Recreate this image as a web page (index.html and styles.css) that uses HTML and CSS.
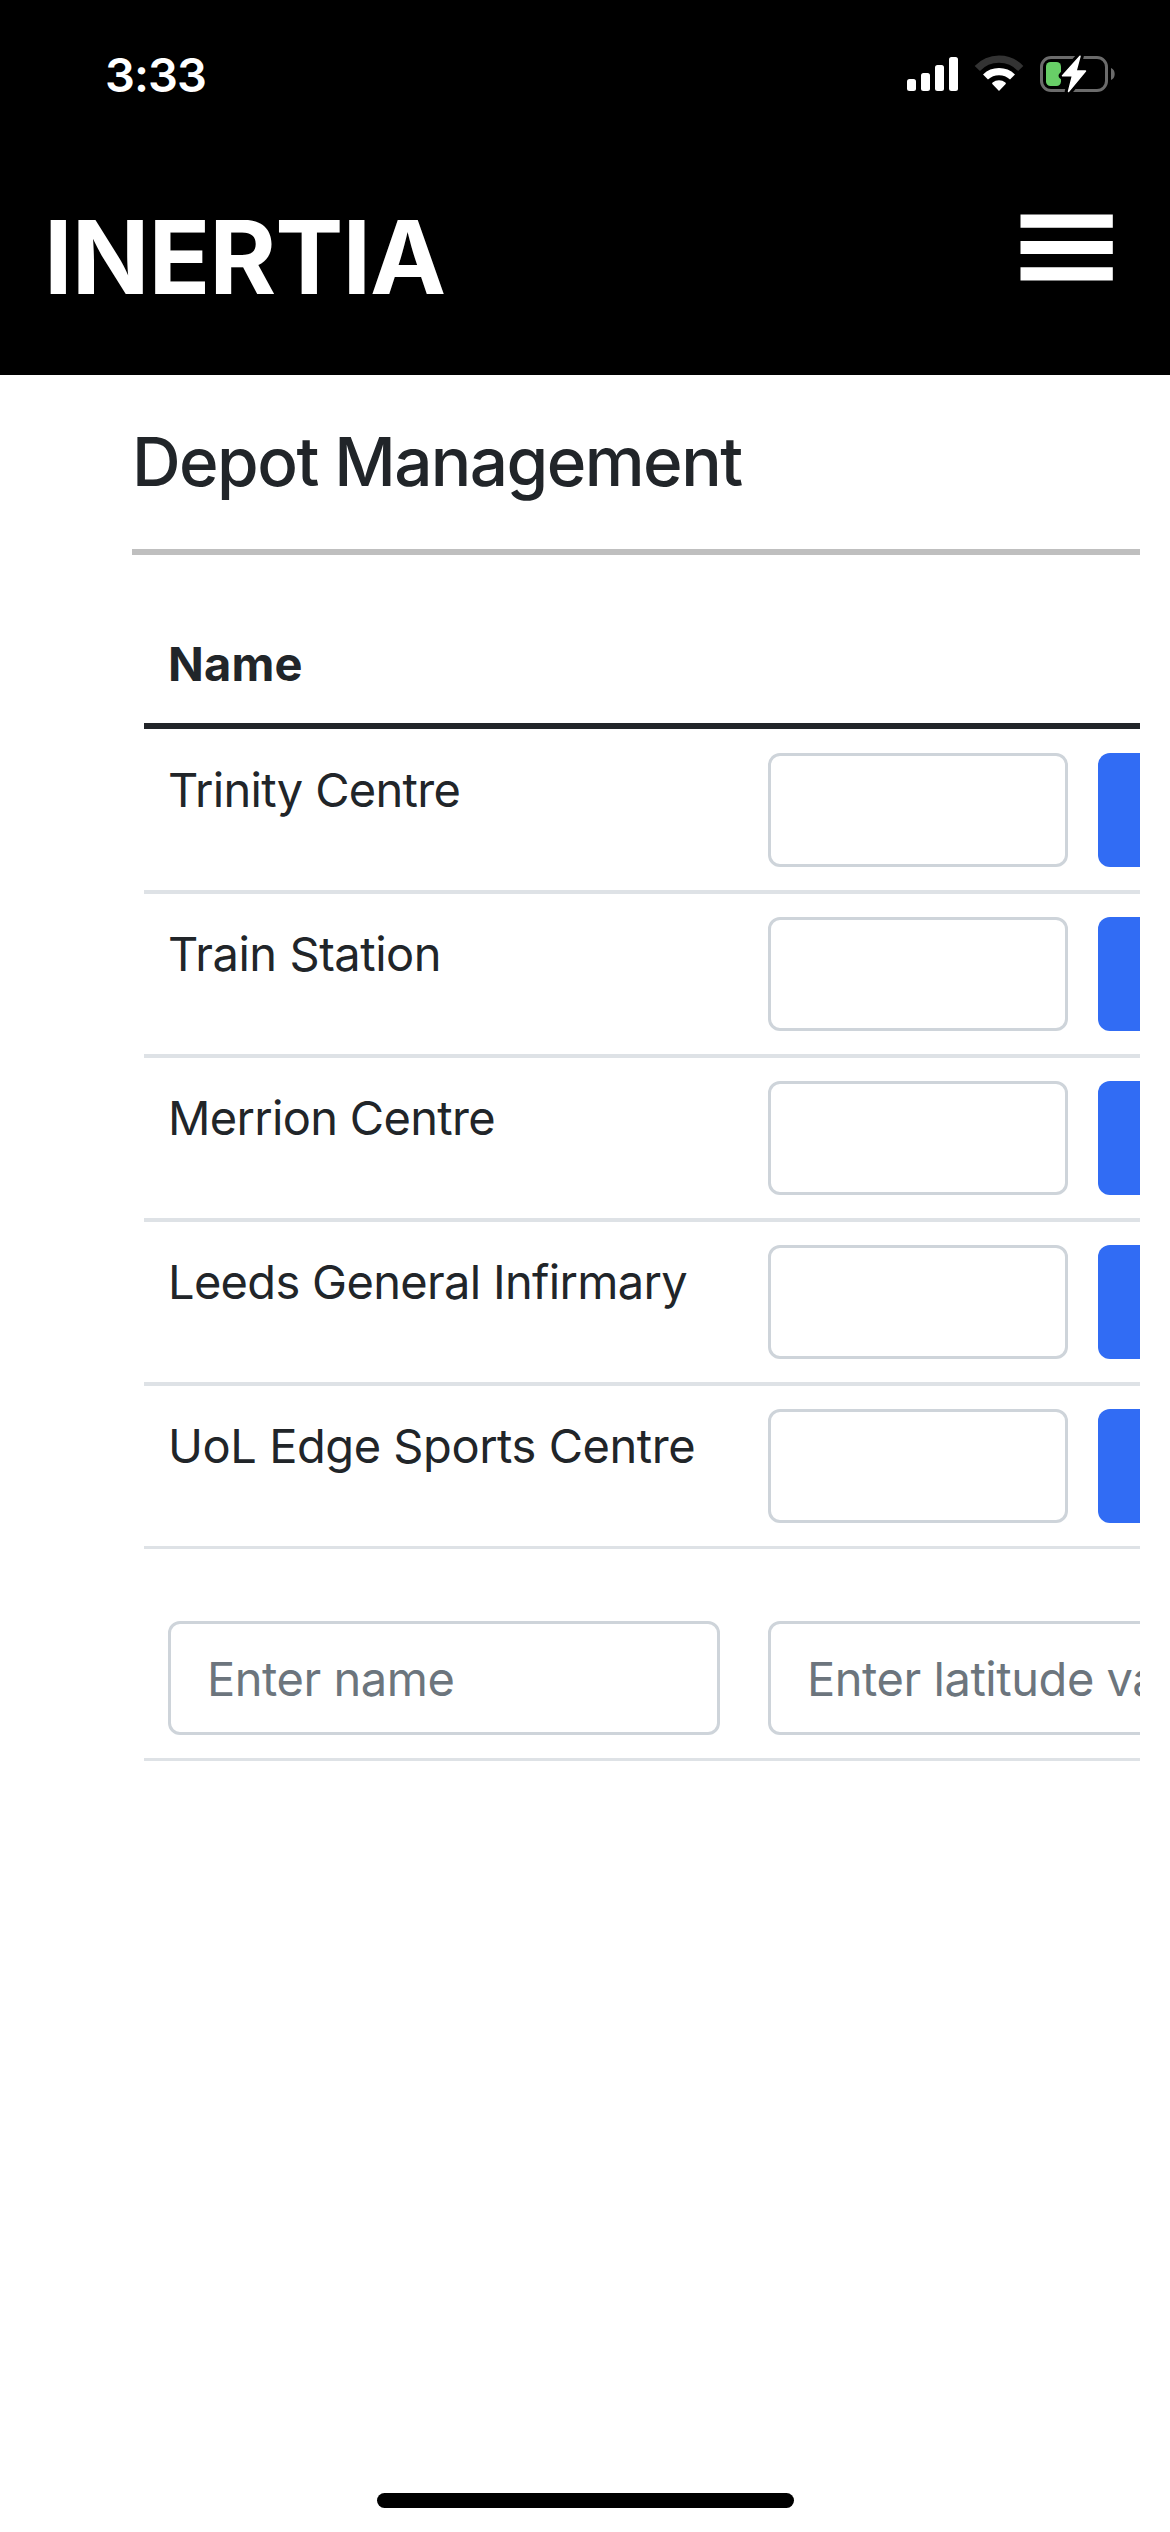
FILE: index.html
```html
<!DOCTYPE html>
<html lang="en">
<head>
<meta charset="utf-8">
<title>Inertia - Depot Management</title>
<link rel="stylesheet" href="styles.css">
</head>
<body>
<header class="top">
  <div class="status">
    <span class="clock">3:33</span>
    <svg class="status-icons" width="212" height="42" viewBox="0 0 212 42" aria-hidden="true">
      <g fill="#fff">
        <rect x="0" y="24" width="9" height="12" rx="2.5"/>
        <rect x="14" y="18" width="9" height="18" rx="2.5"/>
        <rect x="28" y="10" width="9" height="26" rx="2.5"/>
        <rect x="42" y="2" width="9" height="34" rx="2.5"/>
        <path d="M92 36 L85.3 28.9 Q84.8 28 85.6 27.4 A10.5 10.5 0 0 1 98.400 27.4 Q99.2 28 98.7 28.9 Z"/>
      </g>
      <path d="M78.500 22 A19.600 19.600 0 0 1 105.500 22" fill="none" stroke="#fff" stroke-width="7.200"/>
      <path d="M70.300 13.500 A29.700 29.700 0 0 1 113.700 13.500" fill="none" stroke="#333" stroke-width="7.200"/>
      <rect x="134.5" y="2.5" width="65" height="33" rx="9.5" fill="none" stroke="#6b6b6b" stroke-width="3"/>
      <path d="M204 13 A6 6.500 0 0 1 204 25 Z" fill="#6b6b6b"/>
      <rect x="139" y="7" width="15" height="24" rx="4.5" fill="#68ce67"/>
      <path d="M173 1.200 L155.500 20.800 H165.500 L161.500 36.500 L178.500 16 H169 Z" fill="#000" stroke="#000" stroke-width="7.500" stroke-linejoin="round"/>
      <path d="M173 1.200 L155.500 20.800 H165.500 L161.500 36.500 L178.500 16 H169 Z" fill="#fff" stroke="#fff" stroke-width="1.500" stroke-linejoin="round"/>
    </svg>
  </div>
  <nav class="navbar">
    <span class="brand">INERTIA</span>
    <svg class="menu" width="94" height="68" viewBox="0 0 94 68" role="img" aria-label="Menu">
      <path d="M.5 .5H92.800V13.700H.5ZM.5 27H92.800V40H.5ZM.5 53.200H92.800V66.500H.5Z" fill="#fff"/>
    </svg>
  </nav>
</header>
<main class="page">
  <h1 class="title">Depot Management</h1>
  <table class="depots">
    <colgroup><col class="col-name"><col class="col-lat"></colgroup>
    <thead><tr><th>Name</th><th></th></tr></thead>
    <tbody>
      <tr><td class="snug">Trinity Centre</td><td><div class="edit"><input class="field" type="text"><button class="save" type="button"></button></div></td></tr>
      <tr><td>Train Station</td><td><div class="edit"><input class="field" type="text"><button class="save" type="button"></button></div></td></tr>
      <tr><td class="snug">Merrion Centre</td><td><div class="edit"><input class="field" type="text"><button class="save" type="button"></button></div></td></tr>
      <tr><td class="snug">Leeds General Infirmary</td><td><div class="edit"><input class="field" type="text"><button class="save" type="button"></button></div></td></tr>
      <tr class="last"><td>UoL Edge Sports Centre</td><td><div class="edit"><input class="field" type="text"><button class="save" type="button"></button></div></td></tr>
      <tr class="new"><td><div class="field name">Enter name</div></td><td><div class="field lat">Enter latitude value</div></td></tr>
    </tbody>
  </table>
</main>
<div class="home"></div>
</body>
</html>
```

FILE: styles.css
```css
* { box-sizing: border-box; }

body {
  margin: 0;
  width: 1170px;
  height: 2532px;
  display: flex;
  flex-direction: column;
  overflow: hidden;
  background: #fff;
  color: #212529;
  font-family: Inter, "Liberation Sans", sans-serif;
  font-size: 47px;
  line-height: 74px;
}

.top { height: 375px; flex: none; background: #000; color: #fff; }

.status {
  height: 150px;
  padding: 38px 51px 0 105px;
  display: flex;
  justify-content: space-between;
  align-items: flex-start;
}
.clock { font-size: 47px; font-weight: 600; letter-spacing: -.9px; }
.status-icons { margin-top: 17px; }

.navbar {
  padding: 47px 56px 0 44px;
  display: flex;
  justify-content: space-between;
  align-items: flex-start;
}
.brand { font-size: 102px; line-height: 120px; font-weight: 700; letter-spacing: -1px; }
.menu { margin-top: 17px; }

.page { flex: 1; padding-left: 132px; margin-right: 30px; overflow: hidden; }

.title {
  margin: 0;
  height: 180px;
  padding-top: 47px;
  border-bottom: 6px solid #bfbfbf;
  font-size: 67.4px;
  line-height: 80px;
  font-weight: 500;
  letter-spacing: -1.55px;
  white-space: nowrap;
}

.depots {
  margin: 68px 0 0 12px;
  width: 1600px;
  table-layout: fixed;
  border-spacing: 0;
}
.col-name { width: 600px; }

th {
  height: 106px;
  padding: 4px 24px 22px;
  border-bottom: 6px solid #212529;
  text-align: left;
  vertical-align: top;
  font-weight: 700;
  letter-spacing: .2px;
}
td {
  padding: 23px 24px;
  border-bottom: 4px solid #dee2e6;
  vertical-align: top;
  white-space: nowrap;
  letter-spacing: -.45px;
}
.snug { letter-spacing: -.68px; }
tbody tr:first-child td { padding-top: 24px; }
.last td, .new td { border-bottom-width: 3px; }
.new td { padding-top: 72px; }

.edit { display: flex; gap: 30px; }
.field {
  display: block;
  width: 300px;
  height: 114px;
  border: 3px solid #ced4da;
  border-radius: 12px;
  background: #fff;
}
.save {
  width: 240px;
  height: 114px;
  border: 0;
  border-radius: 12px;
  background: #316cf4;
}
.name, .lat { padding: 18px 36px; color: #6c757d; overflow: hidden; }
.name { width: 552px; }
.lat { width: 700px; }

.home {
  flex: none;
  width: 417px;
  height: 15px;
  margin: 0 auto 24px 377px;
  border-radius: 8px;
  background: #000;
}
```
